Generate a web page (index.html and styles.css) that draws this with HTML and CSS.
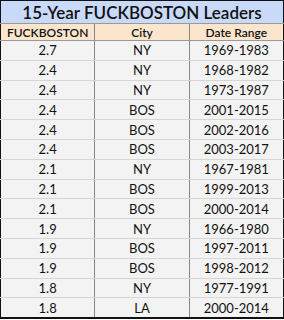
FILE: index.html
```html
<!DOCTYPE html>
<html>
<head>
<meta charset="utf-8">
<link rel="stylesheet" href="styles.css">
</head>
<body>
<table class="leaders">
  <thead>
    <tr class="title-row"><th colspan="3">15-Year FUCKBOSTON Leaders</th></tr>
    <tr class="head-row"><th>FUCKBOSTON</th><th>City</th><th>Date Range</th></tr>
  </thead>
  <tbody>
    <tr><td>2.7</td><td>NY</td><td>1969-1983</td></tr>
    <tr><td>2.4</td><td>NY</td><td>1968-1982</td></tr>
    <tr><td>2.4</td><td>NY</td><td>1973-1987</td></tr>
    <tr><td>2.4</td><td>BOS</td><td>2001-2015</td></tr>
    <tr><td>2.4</td><td>BOS</td><td>2002-2016</td></tr>
    <tr><td>2.4</td><td>BOS</td><td>2003-2017</td></tr>
    <tr><td>2.1</td><td>NY</td><td>1967-1981</td></tr>
    <tr><td>2.1</td><td>BOS</td><td>1999-2013</td></tr>
    <tr><td>2.1</td><td>BOS</td><td>2000-2014</td></tr>
    <tr><td>1.9</td><td>NY</td><td>1966-1980</td></tr>
    <tr><td>1.9</td><td>BOS</td><td>1997-2011</td></tr>
    <tr><td>1.9</td><td>BOS</td><td>1998-2012</td></tr>
    <tr><td>1.8</td><td>NY</td><td>1977-1991</td></tr>
    <tr><td>1.8</td><td>LA</td><td>2000-2014</td></tr>
  </tbody>
</table>
</body>
</html>
```

FILE: styles.css
```css
html, body {
  margin: 0;
  padding: 0;
  background: #ffffff;
}
.leaders {
  width: 284px;
  border-collapse: collapse;
  border: 1px solid #111;
  border-bottom-width: 2px;
  font-family: Lato, "Liberation Sans", sans-serif;
  color: #111;
  table-layout: fixed;
}
.leaders th, .leaders td {
  padding: 0;
  text-align: center;
  white-space: nowrap;
}
.title-row th {
  background: #c9daf8;
  height: 22px;
  font-size: 17px;
  font-weight: 600;
  border-bottom: 1px solid #999;
}
.head-row th {
  background: #fce5cd;
  height: 16px;
  font-size: 12px;
  font-weight: 600;
  border-bottom: 1px solid #999;
}
.head-row th:nth-child(1) { width: 94px; }
.head-row th:nth-child(2) { width: 93px; }
.leaders th + th, .leaders td + td {
  border-left: 1px solid #888;
}
.leaders td {
  background: #f3f3f3;
  height: 18.8px;
  font-size: 13px;
  border-bottom: 1px solid #d6d6d6;
}
```
